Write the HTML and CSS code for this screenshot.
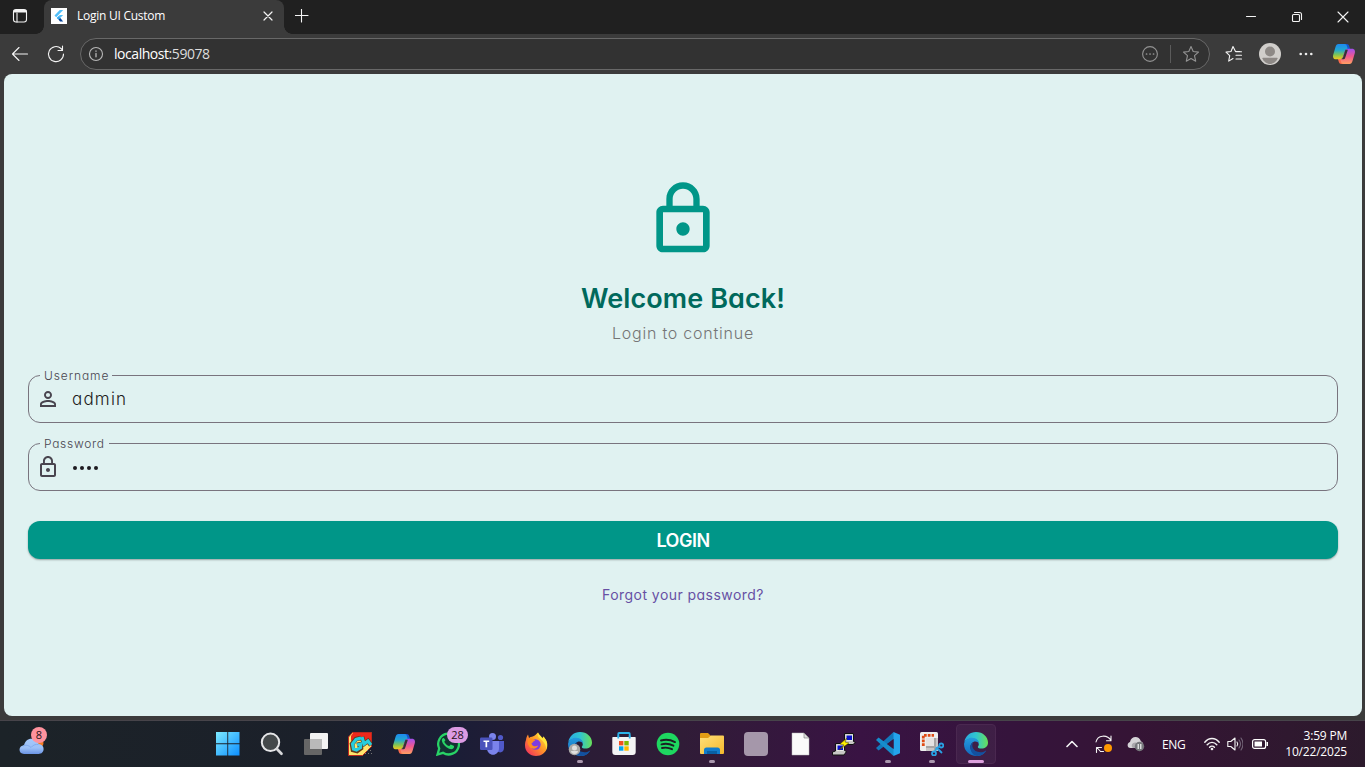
FILE: index.html
```html
<!DOCTYPE html>
<html lang="en">
<head>
<meta charset="utf-8">
<title>Login UI Custom</title>
<link rel="stylesheet" href="styles.css">
</head>
<body>
<svg class="defs" aria-hidden="true">
  <defs>
    <linearGradient id="win" x1="0" y1="0" x2="1" y2="1"><stop offset="0" stop-color="#7deaff"/><stop offset="1" stop-color="#0c8eff"/></linearGradient>
    <linearGradient id="cpA" x1="0" y1="0" x2="0" y2="1"><stop offset="0" stop-color="#1c8af0"/><stop offset=".4" stop-color="#23a8d0"/><stop offset=".7" stop-color="#7fc455"/><stop offset="1" stop-color="#f4c91c"/></linearGradient>
    <linearGradient id="cpB" x1="0" y1="0" x2="0" y2="1"><stop offset="0" stop-color="#a050f0"/><stop offset=".5" stop-color="#f0588e"/><stop offset="1" stop-color="#ffa062"/></linearGradient>
    <linearGradient id="edA" x1="0" y1="0" x2="1" y2="0"><stop offset="0" stop-color="#2aa9e0"/><stop offset=".5" stop-color="#30c5cf"/><stop offset="1" stop-color="#68df58"/></linearGradient>
    <linearGradient id="edB" x1="0" y1="0" x2="0" y2="1"><stop offset="0" stop-color="#249bdd"/><stop offset="1" stop-color="#1267bd"/></linearGradient>
    <linearGradient id="fox" x1="1" y1="0" x2="0" y2="1"><stop offset="0" stop-color="#fff04a"/><stop offset=".45" stop-color="#ff9a25"/><stop offset="1" stop-color="#f01f67"/></linearGradient>
    <linearGradient id="fold" x1="0" y1="0" x2="1" y2="1"><stop offset="0" stop-color="#ffe07a"/><stop offset="1" stop-color="#f5b82c"/></linearGradient>
    <linearGradient id="cloud" x1="0" y1="0" x2="0" y2="1"><stop offset="0" stop-color="#a5c9fb"/><stop offset=".6" stop-color="#9cc0f7"/><stop offset="1" stop-color="#6a94e4"/></linearGradient>
    <symbol id="copilot" viewBox="0 0 24 24">
      <path fill="#1656cf" d="M11 2h3.500c2 0 2.400 1 3 3l.6 2h-3.600c-1.300-.2-2.500-2-3.500-5z"/>
      <path fill="#fa6b4d" d="M13 22H9.500c-2 0-2.400-1-3-3L6 17h3.500c1.600.3 2.400 2.400 3.500 5z"/>
      <path fill="url(#cpA)" d="M6.500 2h6c1.600 0 2.200 1 2.700 3l.4 2c-1.300 0-2.300 1-2.700 2.600L11 15c-.6 1.600-1.500 2.300-3.200 2.300H4C1.300 17.300.5 15 1.300 12.500L3.500 5c.6-2 1.400-3 3-3z"/>
      <path fill="url(#cpB)" d="M17.500 22h-6c-1.600 0-2.200-1-2.700-3l-.4-2c1.700-.1 2.300-1 2.700-2.600L13 9c.6-1.600 1.500-2.300 3.200-2.300H20c2.700 0 3.500 2.300 2.700 4.800L20.500 19c-.6 2-1.400 3-3 3z"/>
      <path fill="#343337" d="M13.400 7.800h2.500L13 16.200c-.3.700-.7 1-1.400 1H9.300c1-.5 1.500-1.100 1.900-2.200z"/>
    </symbol>
    <symbol id="edge" viewBox="0 0 24 24">
      <path fill="url(#edA)" d="M.3 10C1.300 4 6 0 12 0c7 0 12 5 12 10.500 0 4-3 6-6.500 6-2 0-3.700-.6-3.700-1.600 0-.7 1-1.200 1-3C14.800 9 12 6.500 8 6.500c-3.800 0-6 1.500-7.700 3.500z"/>
      <path fill="url(#edB)" d="M.1 11.500C.8 8 4.200 5.800 8 5.800c4.500 0 7.200 3 7 6.200-.7-1.700-2-2.500-3.600-2.500-3 0-5 2.600-5 5.500 0 4 3.500 7.600 8 7.700 3 .1 5.800-1.700 7.800-4.200C20.500 22 17 24 12.600 24 5 24-.5 18 .1 11.500z"/>
      <path fill="#13509f" d="M9.500 10.100C7 13 8 20 16.500 20.300c2.300 0 4.600-1 5.700-1.800C20.500 22 17 23.900 13 23.900 7 23.500 3.500 13.500 9.500 10.100z"/>
    </symbol>
    <symbol id="lock" viewBox="0 0 24 24"><path d="M12 17c1.100 0 2-.9 2-2s-.9-2-2-2-2 .9-2 2 .9 2 2 2zm6-9h-1V6c0-2.760-2.240-5-5-5S7 3.240 7 6v2H6c-1.100 0-2 .9-2 2v10c0 1.100.9 2 2 2h12c1.100 0 2-.9 2-2V10c0-1.100-.9-2-2-2zM8.900 6c0-1.710 1.390-3.100 3.100-3.100s3.100 1.390 3.100 3.100v2H8.900V6zM18 20H6V10h12v10z"/></symbol>
  </defs>
</svg>

<header class="tabbar">
  <div class="tab-menu"><svg width="16" height="16" viewBox="0 0 16 16" class="line"><rect x="1.500" y="1.500" width="13" height="12.500" rx="2.500"/><path d="M5 5v9" /><path d="M2.500 3.200h11" stroke-width="2.400"/></svg></div>
  <div class="tab">
    <svg width="16" height="16" viewBox="0 0 16 16"><path fill="#fff" d="M0 0h16v16H0z"/><path fill="#50bffa" d="M8.800 2h3.400L5.200 9.300 3.500 7.500zM8.800 7h3.400L7.500 11.500 5.800 9.900z"/><path fill="#38a9ee" d="m5.800 9.900 1.700-1.700 1.800 1.700-1.800 1.700z"/><path fill="#08449a" d="m7.500 11.600 1.800-1.700 2.900 3.600H9z"/></svg>
    <span class="tab-title">Login UI Custom</span>
    <svg class="line" width="10" height="10" viewBox="0 0 10 10"><path d="m1 1 8 8M9 1 1 9" stroke-width="1.200"/></svg>
  </div>
  <svg class="new-tab line" width="14" height="14" viewBox="0 0 14 14"><path d="M6.500 0v13M0 6.500h13"/></svg>
  <div class="window-buttons">
    <svg class="line" width="12" height="12" viewBox="0 0 12 12"><path d="M1.500 5.500h9"/></svg>
    <svg class="line" width="12" height="12" viewBox="0 0 12 12"><rect x="1.500" y="3.500" width="7" height="7" rx="1"/><path d="M3.500 1.500h5q2 0 2 2v5"/></svg>
    <svg class="line" width="12" height="12" viewBox="0 0 12 12"><path d="m1 1 10 10M11 1 1 11"/></svg>
  </div>
</header>

<nav class="toolbar">
  <svg class="line" width="18" height="16" viewBox="0 0 18 16"><path d="M1.500 8h15M8 1.500 1.500 8 8 14.500"/></svg>
  <svg class="line reload" width="18" height="18" viewBox="0 0 18 18"><path d="M16.500 9A7.500 7.500 0 1 1 14 3.500L15.500 5M15.500 1v4.500H11"/></svg>
  <div class="address">
    <svg class="line muted" width="16" height="16" viewBox="0 0 16 16"><circle cx="8" cy="8" r="6.500"/><path d="M8 7.400v3.400M8 5v.3" stroke-width="1.300"/></svg>
    <span class="url"><span class="host">localhost</span>:59078</span>
    <svg class="line dim" width="16" height="16" viewBox="0 0 16 16"><circle cx="8" cy="8" r="7.400"/><path d="M4.500 8h.1M8 8h.1M11.500 8h.1" stroke-width="1.700"/></svg>
    <i class="split"></i>
    <svg class="line dim" width="18" height="18" viewBox="0 0 18 18"><path d="m9 1.500 2.200 5 5.300.6-4 3.600 1.200 5.500L9 13.500l-4.700 2.700 1.200-5.500-4-3.600 5.300-.6z"/></svg>
  </div>
  <svg class="line favorites" width="18" height="18" viewBox="0 0 18 18"><path d="M15 6.500h-4.500L8 1.500l-2 5-5 .6 3.700 3.500-1 5.500L8 13.500M11 6.700h5.500M11 10.300h5.500M11 14h5.500"/></svg>
  <svg class="avatar" width="22" height="22" viewBox="0 0 22 22"><circle cx="11" cy="11" r="11" fill="#d0cecb"/><circle cx="11" cy="8.500" r="5" fill="#8d8986"/><path fill="#8d8986" d="M4 14.800h14q.6 0 .6.700C17.500 18.500 14 21 11 21s-6.500-2.500-7.600-5.500q0-.7.600-.7z"/></svg>
  <svg class="more" width="16" height="4" viewBox="0 0 16 4" fill="#eee"><circle cx="2.700" cy="2" r="1.300"/><circle cx="8" cy="2" r="1.300"/><circle cx="13.300" cy="2" r="1.300"/></svg>
  <svg class="assistant" width="24" height="24"><use href="#copilot"/></svg>
</nav>

<main class="page">
  <svg class="hero" width="80" height="80"><use href="#lock"/></svg>
  <h1>Welcome Back!</h1>
  <p class="subtitle">Login to continue</p>
  <form class="form">
    <fieldset class="field"><legend class="label-user">Username</legend>
      <svg width="24" height="24" viewBox="0 0 24 24"><path d="M12 5.900a2.100 2.100 0 1 1 0 4.200 2.100 2.100 0 0 1 0-4.200m0 9c2.970 0 6.100 1.460 6.100 2.100v1.100H5.900V17c0-.64 3.130-2.100 6.100-2.100M12 4C9.790 4 8 5.790 8 8s1.790 4 4 4 4-1.790 4-4-1.790-4-4-4zm0 9c-2.670 0-8 1.340-8 4v3h16v-3c0-2.660-5.330-4-8-4z"/></svg>
      <span class="value">admin</span></fieldset>
    <fieldset class="field"><legend class="label-pass">Password</legend>
      <svg width="24" height="24"><use href="#lock"/></svg>
      <span class="dots"><i></i><i></i><i></i><i></i></span></fieldset>
    <button type="button" class="login"><span>LOGIN</span></button>
  </form>
  <a class="forgot">Forgot your password?</a>
</main>

<footer class="taskbar">
  <div class="weather">
    <svg width="26" height="18" viewBox="0 0 26 18"><circle cx="20" cy="6" r="4.500" fill="#f47b20"/><path fill="url(#cloud)" d="M5 17c-3 0-4.500-2-4.500-4.200C.5 10 2.500 8.500 5 8.300 5.800 4.500 8.800 1.800 12.400 1.800c3.500 0 6.200 2.200 7.200 5.300 3 .1 5 2 5 5 0 3-2 4.900-5 4.900z"/><path d="M4 9c3-1.500 6-.5 8 1.500 2-2.500 4.500-3.500 7.500-3" fill="none" stroke="#82abed"/></svg>
    <b class="count">8</b>
  </div>
  <div class="apps">
    <div class="app"><svg width="24" height="24" viewBox="0 0 24 24"><path fill="url(#win)" d="M0 0h11.300v11.300H0zm12.200 0h11.300v11.300H12.200zM0 12.200h11.300v11.300H0zm12.200 0h11.300v11.300H12.200z"/></svg></div>
    <div class="app"><svg width="24" height="24" viewBox="0 0 24 24"><circle cx="10.500" cy="10.300" r="8.700" fill="#44494b" stroke="#e5e6e8" stroke-width="2"/><path d="m17 17 4.500 4.700" stroke="#d7d8da" stroke-width="2.700" stroke-linecap="round"/></svg></div>
    <div class="app"><svg width="24" height="24" viewBox="0 0 24 24"><rect x="6" y="1" width="18" height="16" rx="1" fill="#f3f3f3"/><rect y="7" width="18" height="16" rx="1" fill="#666"/><path fill="#bababa" d="M6 7h12v10H6z"/></svg></div>
    <div class="app"><svg width="24" height="24" viewBox="0 0 24 24"><path fill="#ffe56c" stroke="#bc281d" d="M4.500.500h19v14l-9 9H.5V5z"/><path fill="#ee281b" d="M5 1h18v12l-5-2-7-5-8 3V4z"/><path fill="none" stroke="#653719" stroke-width="4.600" d="M13 6 8 7l-4 5 1 6 4 1 4-3v-4l-4 1m5-8 2 7 4-3 3 4"/><path fill="none" stroke="#25cddd" stroke-width="3.200" d="M13 6 8 7.500 4.500 12l1 5 3 1 4-2.500V12L9 13m5-8 2 7 4-3 3 4"/><path d="M17 21.500h7m-5-3h5" stroke="#777" stroke-width="1" stroke-dasharray="1 2"/></svg></div>
    <div class="app"><svg width="24" height="24"><use href="#copilot"/></svg></div>
    <div class="app"><svg width="24" height="24" viewBox="0 0 24 24"><path fill="#123432" stroke="#28d366" stroke-width="2.300" d="m1.500 22.500 1.700-6A10.400 10.400 0 1 1 7 20.800z"/><path fill="#28d366" d="M8 6.200c-.5-.4-1.500 0-2 1-.8 2 1.500 5.700 4.500 8 3.300 2.500 6.400 2.500 7.300.5.500-1.200.2-1.600-.2-1.900l-2.800-1.300c-.6-.2-.9 1.700-1.800 1.500-1.900-.5-3.700-2.300-4.600-4-.3-.7 1.200-1.400 1-2.100z"/></svg><b class="bubble">28</b></div>
    <div class="app"><svg width="24" height="24" viewBox="0 0 24 24"><circle cx="12.500" cy="4.500" r="3.500" fill="#7b83eb"/><circle cx="20.500" cy="5.500" r="2.600" fill="#5059c9"/><path fill="#5059c9" d="M16 9h8v7c0 4-4 6-7 3z"/><path fill="#7b83eb" d="M7 9h12v7c0 9-12 9-12 0z"/><rect y="5.500" width="12.500" height="12.500" rx="1.200" fill="#4b53bc"/><path fill="#fff" d="M3.500 8.500h5.700v1.600H7.200v5.200H5.500v-5.200h-2z"/></svg></div>
    <div class="app"><svg width="24" height="24" viewBox="0 0 24 24"><path fill="url(#fox)" d="M2 8c.2-2 1-4 2-5.500L5 6c1-.9 2-1.300 3-1.300C11 4 12 2 14 .5c.5 2 3 3.500 4.500 6l.7-2C23 8 24 12 23 16c-1.200 4.600-5.600 8-11 8C6 24 1 19.500 1 13.500 1 11.500 1.300 9.500 2 8z"/><circle cx="11.500" cy="12.500" r="5.200" fill="#7e3ce0"/><path fill="#ff8b20" d="M4 7c3-1 6.200-.3 7.200 2-2.700 0-1.700 1.500-3.800 2.500 1 3 4.200 3.500 6.800 2-1 3.300-5.700 4.500-8.500 1.500C3.500 12.500 3 9.500 4 7z"/><path fill="#ffe63c" d="M14 .5c.5 2 3 3.500 4.500 6l.7-2c4.200 4 4.600 9 3 13 0-5-2.700-8-6.200-10.700C14 5 13 3 14 .5z"/></svg></div>
    <div class="app open"><svg width="24" height="24" viewBox="0 0 24 24"><use href="#edge"/><circle cx="6.500" cy="17.500" r="5.800" fill="#aaa8a6"/><circle cx="6.500" cy="16" r="2.500" fill="#e0dfde"/><path fill="#e0dfde" d="M3 19h7c0 4-7 4-7 0z"/></svg></div>
    <div class="app"><svg width="24" height="24" viewBox="0 0 24 24"><path d="M6.300 6V1.800q0-.8.800-.8h9.800q.8 0 .8.800V6" fill="none" stroke="#2cb3ea" stroke-width="1.800"/><path fill="#f4f4f4" d="M1 5h22q.7 0 .7.700V20q0 3-3 3H3.300q-3 0-3-3V5.700Q.3 5 1 5z"/><path fill="#f25022" d="M7 9h4.400v4.400H7z"/><path fill="#7fba00" d="M12.300 9h4.400v4.400h-4.400z"/><path fill="#00a4ef" d="M7 14.300h4.400v4.400H7z"/><path fill="#ffb900" d="M12.300 14.300h4.400v4.400h-4.400z"/><path d="M6.300 6.500V3.500m11.400 3V3.500" stroke="#2cb3ea" stroke-width="1.800"/></svg></div>
    <div class="app"><svg width="24" height="24" viewBox="0 0 24 24"><circle cx="12" cy="12" r="11.300" fill="#1ed760"/><path d="M5 8.500c4.500-1.300 9.500-.8 14 1.600M5.500 12.400c4-1.100 8-.7 11.900 1.300M6 16c3.500-.8 6.800-.5 10 1.200" fill="none" stroke="#1b2023" stroke-width="1.900" stroke-linecap="round"/></svg></div>
    <div class="app open"><svg width="24" height="24" viewBox="0 0 24 24"><path fill="#e29c14" d="M0 2q0-1 1-1h7l3 3v6H0z"/><path fill="url(#fold)" d="M0 6h8l3-2.500h12q1 0 1 1V21q0 1-1 1H1q-1 0-1-1z"/><path fill="#117ccc" d="M4 22v-4q0-2.500 2.500-2.500h11Q20 15.500 20 18v4z"/><path fill="#0960a4" d="M7 19h10v3H7z"/></svg></div>
    <div class="app"><span class="blank-app"></span></div>
    <div class="app"><svg width="24" height="24" viewBox="0 0 24 24"><path fill="#fafafa" stroke="#bbb" stroke-width=".5" d="M4 1h12l5 5v17H4z"/><path fill="#ddd" stroke="#777" stroke-width=".6" d="M16 1v5h5z"/></svg></div>
    <div class="app"><svg width="24" height="24" viewBox="0 0 24 24"><path fill="#c7c6c5" stroke="#111" d="M12.500 1.500h9v8l2 1-2.500 2H11.500l-1-1 2-2zM3.500 11.500h9v7l2 1-2.500 3.500H.5v-3l3-1z"/><path fill="#0911c9" stroke="#e9e9e4" d="M14 3h6.500v5.500H14zM5 13h6.500v5.500H5z"/><path fill="#fff000" stroke="#443900" stroke-width=".5" d="m15 6-7 6 4 1-5 5 10-7-4-1z"/></svg></div>
    <div class="app open"><svg width="24" height="24" viewBox="0 0 24 24"><path fill="#1279bc" d="m17.500 0 2 6-17 12.500L0 16z"/><path fill="#168dcc" d="M2.500 5.500 0 8l17.500 16 2-6z"/><path fill="#24a4ec" d="M17.500 0 24 2.700v18.600L17.500 24z"/><path fill="#39153f" d="M17.500 7v10l-6.500-5z"/></svg></div>
    <div class="app open"><svg width="24" height="24" viewBox="0 0 24 24"><rect width="18" height="19" rx="1.500" fill="#eee"/><path d="M3.300 14V3.300H14" fill="none" stroke="#df4b15" stroke-width="2.800" stroke-dasharray="2.700 1.100"/><path fill="#c7c5c5" d="M6 6h12v13H6z"/><path fill="#e5e3e3" d="M6 6h8v9H6z"/><path d="M15 6v13M6 15h9" stroke="#a7a5a5" stroke-width="2"/><g fill="none" stroke="#28a2e4" stroke-width="1.800"><circle cx="21.300" cy="13.500" r="2"/><circle cx="14" cy="21.500" r="2"/><path d="m15 20 1.500-4 3-1.500M17 16l5 5"/></g></svg></div>
    <div class="app open current"><svg width="24" height="24"><use href="#edge"/></svg></div>
  </div>
  <div class="tray">
    <svg class="line" width="12" height="8" viewBox="0 0 12 8"><path d="m1 6.500 5-5 5 5" stroke-width="1.600"/></svg>
    <svg class="sync" width="18" height="18" viewBox="0 0 18 18"><g class="line"><path d="M1 7c1.500-7 11-8 15-1.500M16 1v4.800h-4.500M6.500 12.500h-5v5M2 12.500l3.500 4h3"/></g><circle cx="13" cy="13" r="4" fill="#ff9800"/></svg>
    <svg class="cloud-sync" width="18" height="16" viewBox="0 0 18 16"><path fill="#d6d3d7" d="M3.500 12C-.5 12 0 6.500 3 6c1-6 9-7 11-.5 2 .5 3 3 1 6.500z"/><path fill="#aaa7ac" d="M6 12C3 10 6 5 10 7l4-1 2 6z"/><circle cx="12.500" cy="10.500" r="4.700" fill="#77787c"/><path d="M11.200 8v5m2.600-5v5" stroke="#fff" stroke-width="1.100"/></svg>
    <span class="lang">ENG</span>
    <svg class="line wifi" width="16" height="14" viewBox="0 0 16 14"><path d="M.8 5.300c4-5 10.400-5 14.400 0M3.200 7.800c2.700-3.300 6.900-3.300 9.600 0M5.600 10.200c1.300-1.500 3.500-1.500 4.800 0" stroke-width="1.400"/><circle cx="8" cy="12" r=".8" fill="#fff"/></svg>
    <svg class="line speaker" width="16" height="14" viewBox="0 0 16 14"><path d="M.8 4.500v5h3L8 13V1L3.800 4.500zM10 5q1.500 2 0 4"/><path d="M12 3q3 4 0 8M14 1q4 6 0 12" stroke="#736578"/></svg>
    <svg class="battery" width="16" height="12" viewBox="0 0 16 12"><rect x=".6" y="1.600" width="13" height="8.800" rx="2" fill="none" stroke="#fff" stroke-width="1.200"/><path fill="#fff" d="M2.500 3.500H10v5H2.500zM14.500 4H16v4h-1.500z"/></svg>
    <div class="clock"><span class="time">3:59 PM</span><span class="date">10/22/2025</span></div>
  </div>
</footer>
</body>
</html>
```
FILE: styles.css
```css
* { box-sizing: border-box; }
body { margin: 0; width: 1365px; height: 767px; overflow: hidden; display: flex; flex-direction: column; background: #3b3b3b; color: #fff; font-family: "Open Sans", "Noto Sans", sans-serif; font-size: 12px; }
svg { display: block; flex: none; }
.defs { width: 0; height: 0; position: absolute; }
.line { fill: none; stroke: #f4f4f4; stroke-width: 1.1; stroke-linejoin: round; stroke-linecap: round; }
.muted { stroke: #b7b7b7; }
.dim { stroke: #939393; }

.tabbar { height: 34px; flex: none; display: flex; align-items: stretch; background: #202020; }
.tab-menu { width: 44px; padding: 8px 0 0 12px; }
.tab { position: relative; width: 240px; display: flex; align-items: center; padding: 0 11px 2px 7px; border-radius: 8px 8px 0 0; background: #3b3b3b; }
.tab::before, .tab::after { content: ""; position: absolute; bottom: 0; width: 8px; height: 8px; }
.tab::before { left: -8px; background: radial-gradient(circle at 0 0, transparent 7.5px, #3b3b3b 8px); }
.tab::after { right: -8px; background: radial-gradient(circle at 100% 0, transparent 7.5px, #3b3b3b 8px); }
.tab-title { flex: 1; margin-left: 10px; line-height: 16px; letter-spacing: -.26px; }
.new-tab { margin: 9px 0 0 11px; }
.window-buttons { display: flex; gap: 34px; margin-left: auto; padding: 11px 16px 0 0; }

.toolbar { height: 40px; flex: none; display: flex; align-items: center; padding-left: 11px; }
.reload { margin-left: 18px; }
.address { width: 1130px; height: 32px; margin-left: 15px; padding: 0 9px 0 8px; display: flex; align-items: center; border: 1px solid #686868; border-radius: 16px; background: #323232; }
.address > svg:first-child { margin-right: 10px; margin-left: -1px; }
.url { flex: 1; font-size: 14px; line-height: 18px; letter-spacing: -.45px; color: #ddd; }
.host { color: #fff; }
.split { width: 1px; height: 18px; margin: 0 11px 0 12px; background: #5b5b5b; }
.favorites { margin-left: 15px; }
.avatar { margin-left: 16px; }
.more { margin-left: 17px; }
.assistant { margin-left: 18px; }

.page { width: 1358px; height: 642px; flex: none; margin-left: 4px; padding: 105px 24px 0; border-radius: 8px; background: #e0f2f1; display: flex; flex-direction: column; align-items: center; font-family: Inter, "Open Sans", sans-serif; font-feature-settings: "cv11" 1; }
.hero { fill: #009688; }
h1 { margin: 21px 0 0; font-size: 27px; font-weight: 600; line-height: 38px; letter-spacing: .1px; color: #00695c; }
.subtitle { margin: 3px 0 0; font-size: 16px; font-weight: 300; line-height: 24px; letter-spacing: .77px; color: #757575; }
.form { width: 100%; margin-top: 22px; display: flex; flex-direction: column; }
.field { width: 100%; height: 56px; margin: 0 0 12px; padding: 4px 8px 0 7px; display: flex; align-items: center; border: 1px solid #79747e; border-radius: 12px; fill: #49454f; }
.field legend { margin-left: 4px; padding: 1px 4px 0; font-size: 12px; font-weight: 300; line-height: 15px; letter-spacing: .7px; color: #49454f; }
.field .label-user { letter-spacing: .9px; padding-right: 3px; }
.value { margin-left: 12px; font-size: 17px; font-weight: 300; line-height: 24px; letter-spacing: 1.2px; color: #1d1b20; }
.dots { display: flex; gap: 3px; margin-left: 13px; padding-top: 1px; }
.dots i { width: 4px; height: 4px; border-radius: 50%; background: #1d1b20; }
.login { height: 38px; margin-top: 18px; border: 0; border-radius: 12px; background: #009688; box-shadow: 0 1px 2px #0005; color: #fff; font: 600 18px Inter, sans-serif; letter-spacing: -.5px; }
.forgot { margin-top: 26px; font-size: 14px; line-height: 20px; color: #6750a4; letter-spacing: .45px; }

.taskbar { height: 47px; flex: none; margin-top: 4px; display: flex; align-items: center; border-top: 1px solid #47444a; background: linear-gradient(90deg, #1c2328 0, #1b202a 23%, #1a1d36 33%, #2b1c36 43%, #301c37 50%, #391343 63%, #35143c 74%, #351435 83%, #2c1a2c 100%); }
.weather { position: relative; width: 206px; padding: 4px 0 0 19px; }
.count, .bubble { position: absolute; height: 16px; border-radius: 8px; color: #24121a; font: 11px/16px "Open Sans", sans-serif; text-align: center; }
.count { left: 31px; top: -6px; width: 16px; background: #ff929d; }
.apps { display: flex; }
.app { position: relative; width: 44px; height: 44px; display: flex; align-items: center; justify-content: center; }
.bubble { left: 21px; top: 5px; width: 21px; background: #dc9be3; }
.open::after { content: ""; position: absolute; left: 19px; bottom: 3px; width: 6px; height: 3px; border-radius: 2px; background: #a997ad; }
.current::before { content: ""; position: absolute; inset: 2px; border: 1px solid #4a2850; border-radius: 4px; background: #ffffff0c; }
.current svg { position: relative; }
.current::after { left: 14px; width: 16px; background: #dda0dd; }
.blank-app { width: 24px; height: 24px; border-radius: 4px; background: #a597aa; }
.tray { flex: 1; display: flex; align-items: center; padding-left: 68px; }
.sync { margin-left: 17px; }
.cloud-sync { margin-left: 14px; }
.lang { width: 24px; margin-left: 17px; letter-spacing: -.35px; }
.wifi { margin-left: 18px; }
.speaker { margin-left: 7px; }
.battery { margin-left: 9px; }
.clock { display: flex; flex-direction: column; align-items: flex-end; margin-left: auto; padding-right: 18px; line-height: 16px; letter-spacing: -.2px; }
```
